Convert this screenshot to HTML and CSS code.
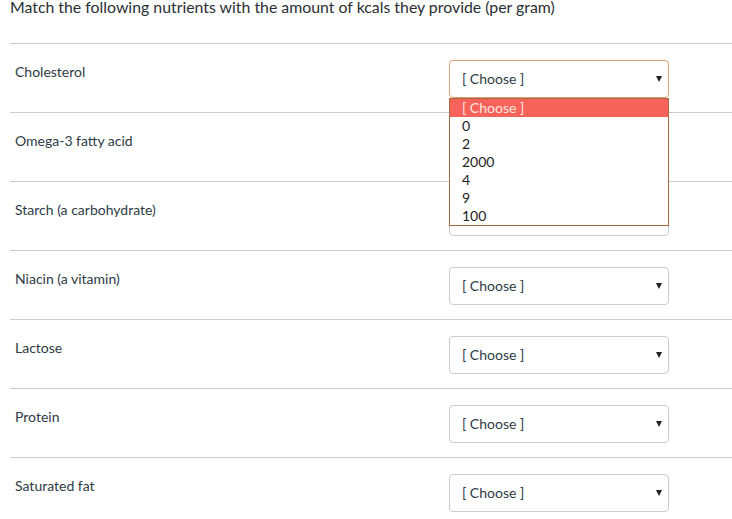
FILE: index.html
```html
<!DOCTYPE html>
<html lang="en">
<head>
    <meta charset="UTF-8">
    <title>Matching question</title>
    <link rel="stylesheet" href="styles.css">
</head>
<body>
    <div class="question">
        <p class="prompt">Match the following nutrients with the amount of kcals they provide (per gram)</p>
        <ul class="answers">
            <li>
                <span class="label">Cholesterol</span>
                <div class="select focus">
                    <span>[ Choose ]</span><i class="arrow"></i>
                    <ul class="options">
                        <li class="on">[ Choose ]</li>
                        <li>0</li>
                        <li>2</li>
                        <li>2000</li>
                        <li>4</li>
                        <li>9</li>
                        <li>100</li>
                    </ul>
                </div>
            </li>
            <li>
                <span class="label">Omega-3 fatty acid</span>
                <div class="select"><span>[ Choose ]</span><i class="arrow"></i></div>
            </li>
            <li>
                <span class="label">Starch (a carbohydrate)</span>
                <div class="select"><span>[ Choose ]</span><i class="arrow"></i></div>
            </li>
            <li>
                <span class="label">Niacin (a vitamin)</span>
                <div class="select"><span>[ Choose ]</span><i class="arrow"></i></div>
            </li>
            <li>
                <span class="label">Lactose</span>
                <div class="select"><span>[ Choose ]</span><i class="arrow"></i></div>
            </li>
            <li>
                <span class="label">Protein</span>
                <div class="select"><span>[ Choose ]</span><i class="arrow"></i></div>
            </li>
            <li>
                <span class="label">Saturated fat</span>
                <div class="select"><span>[ Choose ]</span><i class="arrow"></i></div>
            </li>
        </ul>
    </div>
</body>
</html>
```

FILE: styles.css
```css
body, ul, li, p {
    margin: 0;
    padding: 0;
    list-style: none;
}
body {
    font-family: Lato, "Open Sans", sans-serif;
    color: #2d3b45;
    background: #fff;
}
.question {
    padding-left: 10px;
}
.prompt {
    font-size: 15.85px;
    line-height: 14px;
    color: #2a2f33;
    height: 43px;
}
.answers > li {
    display: flex;
    height: 68px;
    border-top: 1px solid #c7cdd1;
}
.label {
    width: 434px;
    padding: 19px 0 0 5px;
    font-size: 14px;
    line-height: 17px;
}
.select {
    position: relative;
    display: flex;
    align-items: center;
    box-sizing: border-box;
    width: 220px;
    height: 38px;
    margin-top: 16px;
    padding: 0 6px 1px 12px;
    border: 1px solid #c7cdd1;
    border-radius: 4px;
    font-size: 14px;
    color: #2d3b45;
    background: #fff;
}
.select span {
    flex: 1;
}
.select.focus {
    border-color: #e0a06e;
}
.arrow {
    width: 0;
    height: 0;
    border-left: 3px solid transparent;
    border-right: 3px solid transparent;
    border-top: 6px solid #222;
}

/* 展开的下拉选项 */
.options {
    position: absolute;
    top: 37px;
    left: -1px;
    z-index: 2;
    width: 220px;
    box-sizing: border-box;
    border: 1px solid #a86a44;
    background: #fff;
}
.options li {
    height: 18px;
    padding-left: 12px;
    font-size: 14px;
    line-height: 18px;
    color: #222;
}
.options li.on {
    color: #fde6dd;
    background: #f7625a;
}
```
